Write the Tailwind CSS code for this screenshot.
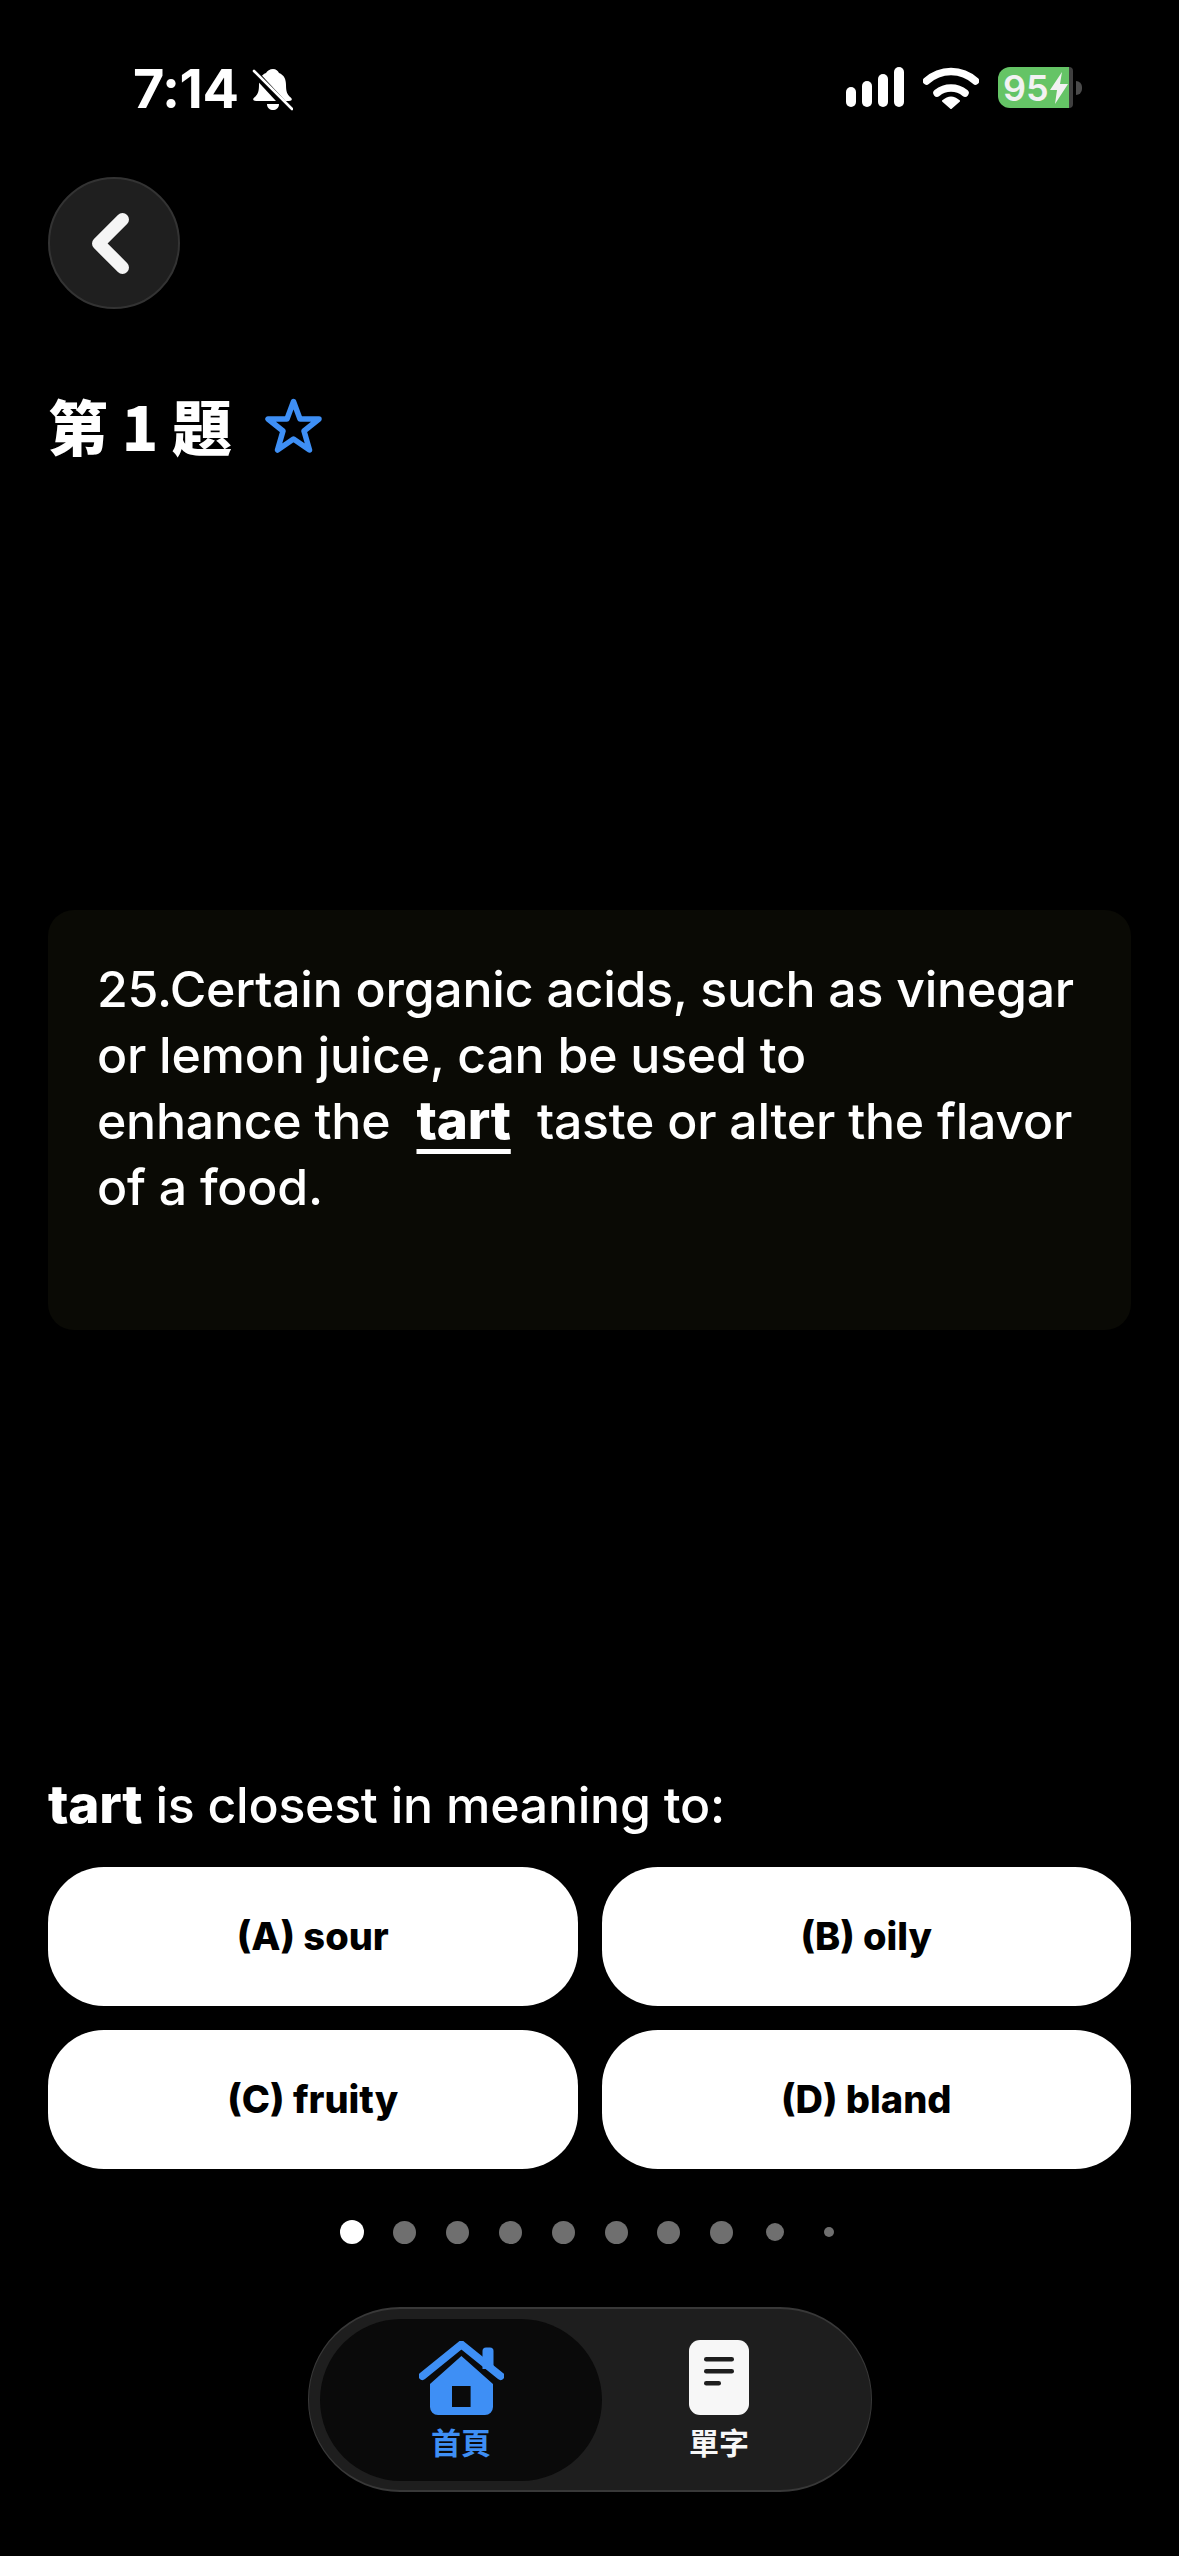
<!DOCTYPE html>
<html lang="zh-Hant">
<head>
  <meta charset="UTF-8" />
  <title>第 1 題</title>
  <script src="https://cdn.jsdelivr.net/npm/@tailwindcss/browser@4"></script>
</head>
<body class="bg-black text-white font-['Inter','Noto_Sans_CJK_TC',sans-serif]">
<div class="w-[1179px] h-[2556px] overflow-hidden flex flex-col bg-black">

  <!-- status bar -->
  <div class="h-[177px] shrink-0 flex items-start justify-between pl-[133px] pr-[97px] pt-[64px]">
    <div class="flex items-center gap-[14px]">
      <span class="text-[54px] leading-[50px] font-bold tracking-[-0.5px]">7:14</span>
      <svg width="41" height="43" viewBox="0 0 41 43">
        <path d="M21 1c3 0 5 2 6 4 5 2 7 6 7 12 0 6 1 9 4 12 3 2 2 4-1 4H4c-3 0-4-2-1-4 3-3 4-6 4-12 0-6 2-10 7-12 1-2 4-4 7-4z" fill="#fff"/>
        <path d="M15 36h12c0 4-3 6-6 6s-6-2-6-6z" fill="#fff"/>
        <path d="M-1 1 L38 43" stroke="#000" stroke-width="7"/>
        <path d="M2 3 L40 41" stroke="#fff" stroke-width="2.6" stroke-linecap="round"/>
      </svg>
    </div>
    <div class="flex items-start gap-[19px] pt-[3px]">
      <svg width="58" height="40" viewBox="0 0 58 40" fill="#fff">
        <rect x="0" y="20" width="10" height="20" rx="5"/>
        <rect x="16" y="14" width="10" height="26" rx="5"/>
        <rect x="32" y="7" width="10" height="33" rx="5"/>
        <rect x="48" y="0" width="10" height="40" rx="5"/>
      </svg>
      <svg width="56" height="42" viewBox="0 0 56 42" fill="none" stroke="#fff" stroke-linecap="round">
        <path d="M3.5 14 A36 36 0 0 1 52.5 14" stroke-width="7.5"/>
        <path d="M14 26 A22 22 0 0 1 42 26" stroke-width="7.5"/>
        <path d="M20 34 Q28 27 36 34 L28 41 Z" fill="#fff" stroke-width="2" stroke-linejoin="round"/>
      </svg>
      <div class="flex items-center">
        <div class="w-[71px] h-[41px] rounded-l-[12px] bg-[#65c466] flex items-center pl-[5px] gap-[1px]">
          <span class="text-[36px] leading-[36px] font-semibold text-[#f2f2f2]">95</span>
          <svg width="18" height="32" viewBox="0 0 18 32" fill="#f2f2f2"><path d="M12 0 L0 18 H7 L5 32 L18 12 H10 Z"/></svg>
        </div>
        <div class="w-[4px] h-[41px] rounded-r-[10px] bg-[#3f3f3f]"></div>
        <div class="ml-[3px] w-[6px] h-[14px] rounded-r-[6px] bg-[#4a4a4a]"></div>
      </div>
    </div>
  </div>

  <div class="px-[48px] flex flex-col">
    <!-- back button -->
    <button class="w-[132px] h-[132px] rounded-full bg-[#1f1f1f] border-2 border-[#333333] flex items-center justify-center pr-[8px]">
      <svg width="37" height="61" viewBox="0 0 37 61" fill="none" stroke="#f5f5f5" stroke-width="13" stroke-linecap="round" stroke-linejoin="round">
        <path d="M30.5 6.5 L6.5 30.5 L30.5 54.5"/>
      </svg>
    </button>

    <!-- title -->
    <div class="mt-[81px] h-[70px] flex items-center gap-[33px]">
      <h1 class="text-[60px] leading-[70px] font-black font-['Noto_Sans_CJK_TC',sans-serif]">第 1 題</h1>
      <svg width="57" height="55" viewBox="0 0 57 55" fill="none" stroke="#3e8ff5" stroke-width="5.5" stroke-linejoin="round">
        <path d="M28.5 3.5 L35 21 H54 L39 33 L44.5 52 L28.5 41 L12.5 52 L18 33 L3 21 H22 Z"/>
      </svg>
    </div>

    <!-- passage -->
    <div class="mt-[450px] h-[420px] rounded-[26px] bg-[#0a0a05] pl-[49px] pr-[30px] pt-[46px] text-[50px] leading-[66px] font-medium tracking-[-0.25px]">
      25.Certain organic acids, such as vinegar or lemon juice, can be used to enhance&nbsp;the&nbsp;&nbsp;<span class="text-[53px] leading-none font-extrabold underline decoration-[5px] underline-offset-[10px]">tart</span>&nbsp;&nbsp;taste or alter the flavor of a food.
    </div>

    <!-- question -->
    <p class="mt-[442px] text-[50px] leading-[66px] font-medium tracking-[-0.25px]"><span class="text-[53px] leading-none font-extrabold">tart</span> is closest in meaning to:</p>

    <div class="mt-[29px] grid grid-cols-2 gap-[24px] text-black text-[38px] font-extrabold">
      <button class="h-[139px] rounded-[56px] bg-white">(A) sour</button>
      <button class="h-[139px] rounded-[56px] bg-white">(B) oily</button>
      <button class="h-[139px] rounded-[56px] bg-white">(C) fruity</button>
      <button class="h-[139px] rounded-[56px] bg-white">(D) bland</button>
    </div>
  </div>

  <!-- page dots -->
  <div class="mt-[51px] h-[24px] pl-[340px] flex items-center">
    <span class="w-[24px] h-[24px] rounded-full bg-white"></span>
    <span class="ml-[29px] w-[23px] h-[23px] rounded-full bg-[#6f6f6f]"></span>
    <span class="ml-[30px] w-[23px] h-[23px] rounded-full bg-[#6f6f6f]"></span>
    <span class="ml-[30px] w-[23px] h-[23px] rounded-full bg-[#6f6f6f]"></span>
    <span class="ml-[30px] w-[23px] h-[23px] rounded-full bg-[#6f6f6f]"></span>
    <span class="ml-[30px] w-[23px] h-[23px] rounded-full bg-[#6f6f6f]"></span>
    <span class="ml-[29px] w-[23px] h-[23px] rounded-full bg-[#6f6f6f]"></span>
    <span class="ml-[30px] w-[23px] h-[23px] rounded-full bg-[#6f6f6f]"></span>
    <span class="ml-[33px] w-[18px] h-[18px] rounded-full bg-[#6f6f6f]"></span>
    <span class="ml-[40px] w-[10px] h-[10px] rounded-full bg-[#6f6f6f]"></span>
  </div>

  <!-- tab bar -->
  <nav class="mt-[63px] ml-[308px] w-[564px] h-[185px] rounded-[92px] bg-[#1e1e1e] border-y-2 border-x border-[#383838] flex items-center pl-[11px]">
    <div class="w-[282px] h-[162px] rounded-[81px] bg-[#0a0a0a] flex flex-col items-center pt-[22px]">
      <svg width="85" height="74" viewBox="0 0 85 74" fill="#3e8ff5">
        <path d="M63.5 10a3.5 3.5 0 0 1 3.5-3.5h4a3.5 3.5 0 0 1 3.5 3.5v18h-11z"/>
        <path d="M3.5 35 L42.4 3.5 L81.5 35" fill="none" stroke="#3e8ff5" stroke-width="8" stroke-linecap="round" stroke-linejoin="round"/>
        <path fill-rule="evenodd" d="M42.4 15 L74 43 V66 a8 8 0 0 1 -8 8 H19 a8 8 0 0 1 -8 -8 V43 Z M33 45 h18.6 v21 H33 Z"/>
      </svg>
      <span class="mt-[9px] text-[30px] leading-[34px] font-bold text-[#3e8ff5] font-['Noto_Sans_CJK_TC',sans-serif]">首頁</span>
    </div>
    <div class="w-[234px] flex flex-col items-center pb-[1px]">
      <svg width="60" height="75" viewBox="0 0 60 75">
        <rect width="60" height="75" rx="11" fill="#f7f7f7"/>
        <rect x="15" y="17" width="30" height="4.5" rx="2.25" fill="#1e1e1e"/>
        <rect x="15" y="29" width="30" height="4.5" rx="2.25" fill="#1e1e1e"/>
        <rect x="15" y="41" width="17" height="4.5" rx="2.25" fill="#1e1e1e"/>
      </svg>
      <span class="mt-[9px] text-[30px] leading-[34px] font-bold text-[#f7f7f7] font-['Noto_Sans_CJK_TC',sans-serif]">單字</span>
    </div>
  </nav>
</div>
</body>
</html>
